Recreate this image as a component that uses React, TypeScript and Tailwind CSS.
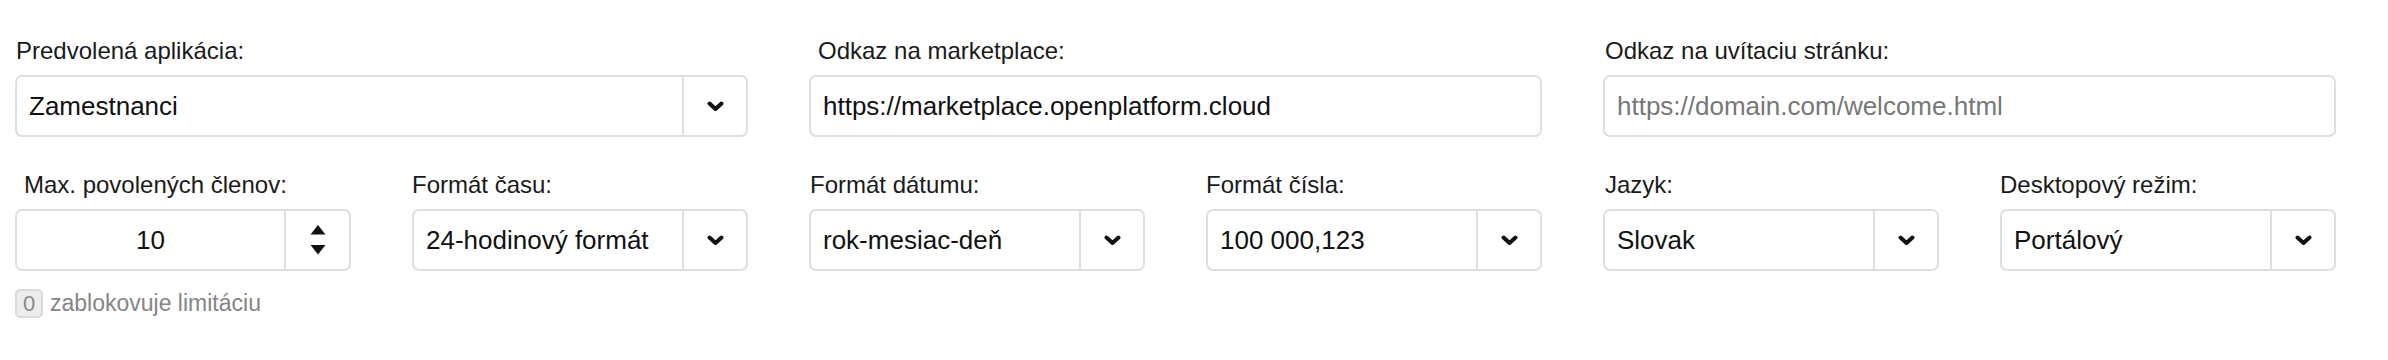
import { ReactNode } from "react"

function Chevron() {
  return (
    <svg width="17" height="11" viewBox="0 0 17 11" className="text-[#111]">
      <path d="M2.5 2.5 L8.5 8 L14.5 2.5" fill="none" stroke="currentColor" strokeWidth="4" strokeLinecap="round" strokeLinejoin="round" />
    </svg>
  )
}

function Spinner() {
  return (
    <svg width="16" height="32" viewBox="0 0 16 32" className="text-[#111]">
      <path d="M8 1 L15.5 10.5 L0.5 10.5 Z" fill="currentColor" />
      <path d="M0.5 21 L15.5 21 L8 30.5 Z" fill="currentColor" />
    </svg>
  )
}

function Field({ label, indent, children }: { label: string; indent?: string; children: ReactNode }) {
  return (
    <div className="flex flex-col">
      <label className={`text-[24px] leading-[29px] text-[#1a1a1a] mb-[10px] ${indent ?? ""}`}>{label}</label>
      {children}
    </div>
  )
}

function Select({ value }: { value: string }) {
  return (
    <div className="flex h-[62px] border-2 border-[#dfdfdf] rounded-[7px] bg-white">
      <div className="flex-1 flex items-center pl-[12px] text-[26px] text-[#111] truncate">{value}</div>
      <div className="w-[64px] border-l-2 border-[#dfdfdf] flex items-center justify-center">
        <Chevron />
      </div>
    </div>
  )
}

function TextInput({ value, placeholder }: { value?: string; placeholder?: string }) {
  return (
    <input
      readOnly
      value={value ?? ""}
      placeholder={placeholder}
      className="h-[62px] w-full border-2 border-[#dfdfdf] rounded-[7px] bg-white pl-[12px] text-[26px] text-[#111] placeholder:text-[#777] outline-none"
    />
  )
}

export default function App() {
  return (
    <div className="w-[2388px] h-[360px] bg-white pl-[15px] pt-[36px] font-['Liberation_Sans',Arial,sans-serif]">
      <div className="grid grid-cols-6 gap-x-[61px] gap-y-[33px] w-[2321px] items-start">
        {/* Row 1 */}
        <div className="col-span-2">
          <Field label="Predvolená aplikácia:" indent="pl-[1px]">
            <Select value="Zamestnanci" />
          </Field>
        </div>
        <div className="col-span-2">
          <Field label="Odkaz na marketplace:" indent="pl-[9px]">
            <TextInput value="https://marketplace.openplatform.cloud" />
          </Field>
        </div>
        <div className="col-span-2">
          <Field label="Odkaz na uvítaciu stránku:" indent="pl-[2px]">
            <TextInput placeholder="https://domain.com/welcome.html" />
          </Field>
        </div>

        {/* Row 2 */}
        <Field label="Max. povolených členov:" indent="pl-[9px]">
          <div className="flex h-[62px] border-2 border-[#dfdfdf] rounded-[7px] bg-white">
            <div className="flex-1 flex items-center justify-center text-[26px] text-[#111]">10</div>
            <div className="w-[65px] border-l-2 border-[#dfdfdf] flex items-center justify-center">
              <Spinner />
            </div>
          </div>
          <div className="flex items-center mt-[15px]">
            <span className="h-[29px] w-[28px] flex items-center justify-center bg-[#ececec] border-2 border-[#dadada] rounded-[5px] text-[22px] text-[#888]">0</span>
            <span className="ml-[7px] text-[23px] text-[#858585]">zablokovuje limitáciu</span>
          </div>
        </Field>
        <Field label="Formát času:">
          <Select value="24-hodinový formát" />
        </Field>
        <Field label="Formát dátumu:" indent="pl-[1px]">
          <Select value="rok-mesiac-deň" />
        </Field>
        <Field label="Formát čísla:">
          <Select value="100 000,123" />
        </Field>
        <Field label="Jazyk:" indent="pl-[2px]">
          <Select value="Slovak" />
        </Field>
        <Field label="Desktopový režim:">
          <Select value="Portálový" />
        </Field>
      </div>
    </div>
  )
}
